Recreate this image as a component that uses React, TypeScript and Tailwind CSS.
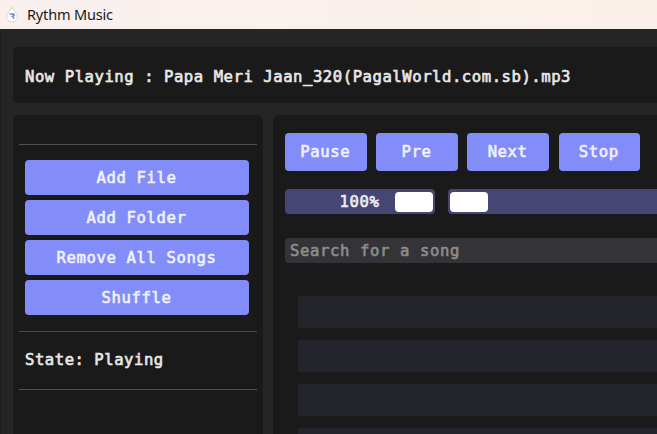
const mono =
  "font-['DejaVu_Sans_Mono',monospace] text-[15.6px] leading-[20px] whitespace-pre [-webkit-text-stroke:0.65px_currentColor]";

function DropIcon() {
  return (
    <svg width="14" height="18" viewBox="0 0 14 18" className="shrink-0">
      <path
        d="M7 1.2C8 4 12.4 7.2 12.4 10.6A5.4 5.4 0 0 1 1.6 10.6C1.6 7.2 6 4 7 1.2Z"
        fill="#fff"
        stroke="#d8d4d6"
        strokeWidth="1"
      />
      <path d="M4.6 8H8.2Q9.4 8.2 9.1 9.2Q8.8 10.2 7.4 10.2H6.4M7.8 10.3L8.9 12.8" fill="none" stroke="#7884cf" strokeWidth="1.6" />
    </svg>
  );
}

function SideButton({ label }: { label: string }) {
  return (
    <button className={`${mono} flex h-[35px] w-[224px] items-center justify-center rounded-[4px] bg-[#828dfa] pr-[1px] tracking-[0.61px] text-[#f0f0ff]`}>
      {label}
    </button>
  );
}

function ControlButton({ label }: { label: string }) {
  return (
    <button className={`${mono} flex h-[38px] w-[81.5px] shrink-0 items-center justify-center rounded-[4px] bg-[#828dfa] pr-[1px] tracking-[0.61px] text-[#f0f0ff]`}>
      {label}
    </button>
  );
}

export default function App() {
  return (
    <div className="flex h-[434px] w-[657px] flex-col overflow-hidden bg-[#252525]">
      <header className="flex h-[29px] shrink-0 items-center bg-linear-to-r from-[#f9f0ee] to-[#fbf0e9] pl-[5px]">
        <DropIcon />
        <span className="ml-2 -mt-[2px] font-['Noto_Sans',sans-serif] text-[14.5px] leading-[20px] tracking-[-0.17px] text-[#191818]">
          Rythm Music
        </span>
      </header>

      <main className="flex min-h-0 flex-1 flex-col border-l border-[#1f1f1f] pt-[17.5px] pl-3">
        <section className="flex h-[56px] shrink-0 items-center rounded-l-[5px] bg-[#1a1a1a] pt-[4px] pl-3">
          <span className={`${mono} tracking-[0.54px] text-[#e8e8e8]`}>
            Now Playing : Papa Meri Jaan_320(PagalWorld.com.sb).mp3
          </span>
        </section>

        <div className="mt-[12.5px] flex min-h-0 flex-1 gap-[10px]">
          <aside className="w-[249.5px] shrink-0 rounded-t-[5px] bg-[#1a1a1a] px-[6px] pt-[29px]">
            <div className="h-px bg-[#505050]" />
            <div className="mt-[15px] flex flex-col gap-[5px] pl-[6px]">
              <SideButton label="Add File" />
              <SideButton label="Add Folder" />
              <SideButton label="Remove All Songs" />
              <SideButton label="Shuffle" />
            </div>
            <div className="mt-[16px] h-px bg-[#484848]" />
            <p className={`${mono} mt-[18px] pl-[6px] tracking-[0.52px] text-[#e8e8e8]`}>State: Playing</p>
            <div className="mt-[19px] h-px bg-[#505050]" />
          </aside>

          <section className="min-w-0 flex-1 overflow-hidden rounded-tl-[5px] bg-[#1a1a1a] pt-[17.5px] pl-[12.5px]">
            <div className="flex gap-[9.7px]">
              <ControlButton label="Pause" />
              <ControlButton label="Pre" />
              <ControlButton label="Next" />
              <ControlButton label="Stop" />
            </div>

            <div className="mt-[18.5px] flex gap-[13px]">
              <div className="flex h-[25px] w-[150px] shrink-0 items-center justify-end rounded-[4px] bg-[#454673] pr-[2px]">
                <span className={`${mono} mr-[15.5px] tracking-[0.61px] text-[#ebebf2]`}>100%</span>
                <div className="h-[20px] w-[38px] rounded-[4px] bg-white" />
              </div>
              <div className="flex h-[25px] flex-1 items-center rounded-l-[4px] bg-[#454673] pl-[2px]">
                <div className="h-[20px] w-[38px] rounded-[4px] bg-white" />
              </div>
            </div>

            <div className={`${mono} mt-[24px] flex h-[25px] items-center rounded-l-[4px] bg-[#343337] pl-[5px] tracking-[0.61px] text-[#8c8c8c]`}>
              Search for a song
            </div>

            <div className="mt-[33px] ml-[12.5px] flex flex-col gap-[12.5px]">
              {[0, 1, 2, 3].map((row) => (
                <div key={row} className="h-[31.5px] shrink-0 rounded-l-[2px] bg-[#24242c]" />
              ))}
            </div>
          </section>
        </div>
      </main>
    </div>
  );
}
